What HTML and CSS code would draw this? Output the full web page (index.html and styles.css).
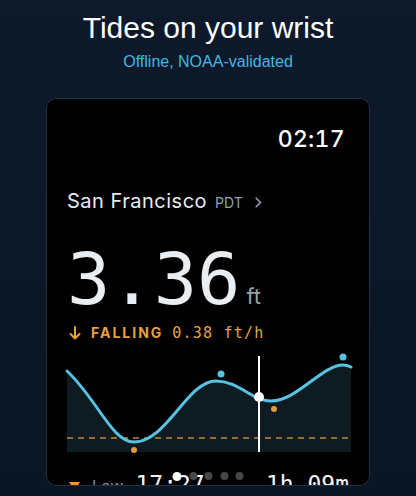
FILE: index.html
```html
<!DOCTYPE html>
<html>
<head>
<meta charset="utf-8">
<link rel="stylesheet" href="styles.css">
</head>
<body>
<header class="hero">
  <h1 class="title">Tides on your wrist</h1>
  <p class="subtitle">Offline, NOAA-validated</p>
</header>
<main class="card">
  <div class="status">02:17</div>
  <div class="location">
    <span class="city">San Francisco</span>
    <span class="tz">PDT</span>
    <svg class="chev" width="7" height="11" viewBox="0 0 7 11"><polyline points="1.2,1.2 5.5,5.5 1.2,9.8" fill="none" stroke="#8da2b3" stroke-width="1.6" stroke-linecap="round" stroke-linejoin="round"/></svg>
  </div>
  <div class="reading"><span class="value">3.36</span><span class="unit">ft</span></div>
  <div class="trend">
    <svg class="arrow" width="12" height="14" viewBox="0 0 12 14"><path d="M6 1 V12.5 M1.5 8 L6 12.5 L10.5 8" fill="none" stroke="#e8a040" stroke-width="2" stroke-linecap="round" stroke-linejoin="round"/></svg>
    <span class="state">FALLING</span>
    <span class="rate">0.38 ft/h</span>
  </div>
  <svg class="chart" width="284" height="100" viewBox="0 0 284 100">
    <path d="M0,17 C30,45 45,88 67,88 C100,88 120,27 149,27 C172,27 185,47 204,47 C230,47 255,11 276,11 C280,11 284,13 284,13 L284,98 L0,98 Z" fill="#0e1c21"/>
    <line x1="0" y1="84" x2="284" y2="84" stroke="#c5863a" stroke-width="1.5" stroke-dasharray="6 5"/>
    <path d="M0,17 C30,45 45,88 67,88 C100,88 120,27 149,27 C172,27 185,47 204,47 C230,47 255,11 276,11 C280,11 284,13 284,13" fill="none" stroke="#57c3e3" stroke-width="3" stroke-linecap="round"/>
    <line x1="192" y1="2" x2="192" y2="98" stroke="#ffffff" stroke-width="2"/>
    <circle cx="192" cy="43" r="5" fill="#ffffff"/>
    <circle cx="154" cy="20" r="3.5" fill="#57c3e3"/>
    <circle cx="276" cy="3" r="3.5" fill="#57c3e3"/>
    <circle cx="67" cy="96" r="3" fill="#e39a3e"/>
    <circle cx="207" cy="55" r="3" fill="#e39a3e"/>
  </svg>
  <div class="next">
    <div class="next-left">
      <svg class="tri" width="11" height="10" viewBox="0 0 11 10"><polygon points="0,0 11,0 5.5,9" fill="#e39a3e"/></svg>
      <span class="next-label">Low</span>
      <span class="next-time">17:27</span>
    </div>
    <span class="next-in">1h 09m</span>
  </div>
  <div class="pager">
    <span class="dot active"></span>
    <span class="dot"></span>
    <span class="dot"></span>
    <span class="dot"></span>
    <span class="dot"></span>
  </div>
</main>
</body>
</html>
```
FILE: styles.css
```css
html, body {
  margin: 0;
  padding: 0;
}
body {
  width: 416px;
  height: 496px;
  overflow: hidden;
  background: linear-gradient(180deg, #0e1a2b 0%, #0b1624 100%);
  font-family: Inter, "Noto Sans", sans-serif;
}
.hero {
  padding-top: 10px;
  text-align: center;
}
.title {
  margin: 0;
  font-family: "Liberation Sans", Arial, sans-serif;
  font-weight: 400;
  font-size: 30px;
  line-height: 36px;
  color: #ffffff;
}
.subtitle {
  margin: 6px 0 0;
  font-family: "Liberation Sans", Arial, sans-serif;
  font-size: 16px;
  line-height: 20px;
  color: #3fb8e4;
}
.card {
  position: relative;
  box-sizing: border-box;
  width: 324px;
  height: 388px;
  margin: 26px auto 0;
  padding: 0 20px;
  background: #000000;
  border: 1px solid #1e3045;
  border-radius: 10px;
  overflow: hidden;
}
.status {
  margin-top: 26px;
  padding-right: 4px;
  text-align: right;
  font-size: 23px;
  font-weight: 500;
  line-height: 28px;
  letter-spacing: 0.3px;
  color: #ffffff;
  font-variant-numeric: tabular-nums;
}
.location {
  display: flex;
  align-items: baseline;
  margin-top: 36px;
  line-height: 24px;
}
.city {
  font-size: 20px;
  color: #e6ecf0;
  letter-spacing: 0.5px;
}
.tz {
  margin-left: 8px;
  font-size: 14px;
  color: #8da2b3;
}
.chev {
  margin-left: 12px;
  align-self: center;
}
.reading {
  margin-top: 28px;
  line-height: 72px;
  height: 72px;
}
.value {
  font-family: "DejaVu Sans Mono", monospace;
  font-size: 72px;
  color: #e8eef2;
}
.unit {
  margin-left: 6px;
  font-size: 22px;
  line-height: 22px;
  color: #8ea4b4;
}
.trend {
  display: flex;
  align-items: center;
  margin-top: 8.5px;
  height: 18px;
  color: #e8a040;
}
.arrow {
  margin-left: 2px;
  margin-right: 10px;
}
.state {
  font-size: 14px;
  font-weight: 700;
  letter-spacing: 2px;
}
.rate {
  margin-left: 9px;
  font-family: "DejaVu Sans Mono", monospace;
  font-size: 15px;
  letter-spacing: 1.2px;
}
.chart {
  display: block;
  margin-top: 12.5px;
  overflow: visible;
}
.next {
  display: flex;
  justify-content: space-between;
  align-items: baseline;
  margin-top: 16px;
  line-height: 28px;
}
.next-left {
  display: flex;
  align-items: baseline;
}
.tri {
  margin-left: 2px;
  margin-right: 12px;
}
.next-label {
  font-size: 16px;
  color: #7d8e9c;
  margin-right: 12px;
}
.next-time,
.next-in {
  font-family: "DejaVu Sans Mono", monospace;
  font-size: 23px;
  color: #f2f5f7;
}
.pager {
  position: absolute;
  left: 50%;
  bottom: 4.5px;
  transform: translateX(-50%);
  display: flex;
  gap: 7.5px;
}
.dot {
  width: 8px;
  height: 8px;
  border-radius: 50%;
  background: #474747;
}
.dot.active {
  width: 9px;
  height: 9px;
  background: #ffffff;
}
```
